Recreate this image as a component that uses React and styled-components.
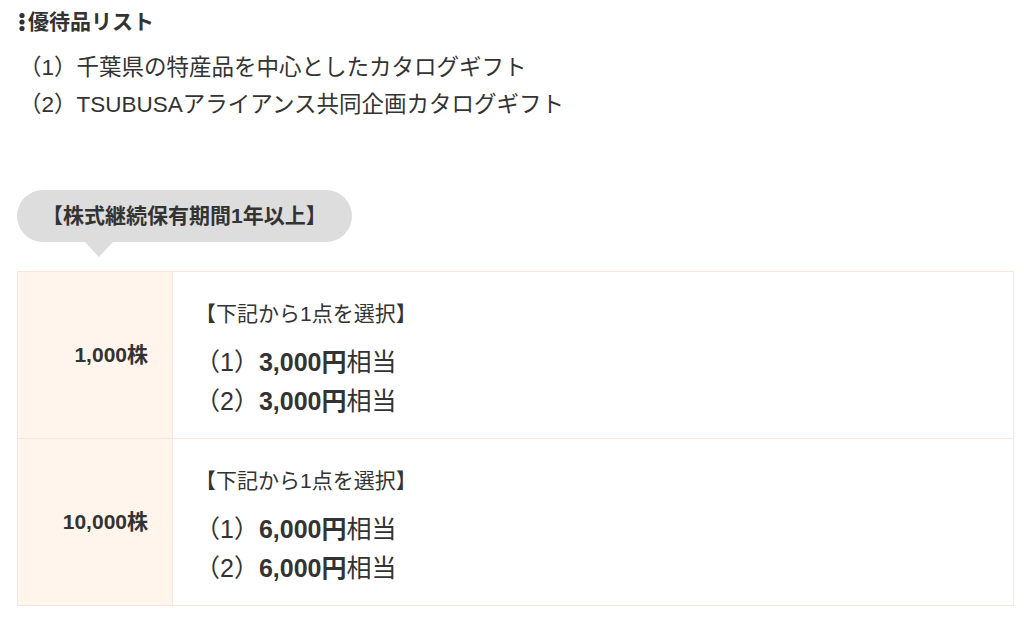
import React from 'react';
import styled, { createGlobalStyle } from 'styled-components';

const GlobalStyle = createGlobalStyle`
body {
  margin: 0;
  background: #fff;
  color: #333;
  font-family: "Liberation Sans", "Noto Sans CJK JP", sans-serif;
}
`

const Page = styled.div`
  padding: 9px 11px 0 17px;
`

const Heading = styled.h3`
  display: flex;
  align-items: center;
  gap: 1px;
  margin: 0;
  font-size: 21px;
  line-height: 26px;
  font-weight: bold;
  color: #333;
`

const GiftList = styled.ul`
  list-style: none;
  margin: 14px 0 0;
  padding: 0 0 0 2px;
  font-size: 22.5px;
  line-height: 37px;
`

const Bubble = styled.div`
  position: relative;
  display: inline-block;
  margin-top: 67px;
  padding: 0 25px;
  height: 52px;
  line-height: 52px;
  border-radius: 26px;
  background: #dddddd;
  font-size: 21px;
  font-weight: bold;
  color: #333;

  &::after {
    content: "";
    position: absolute;
    left: 68px;
    top: 52px;
    border-left: 14px solid transparent;
    border-right: 14px solid transparent;
    border-top: 15px solid #dddddd;
  }
`

const Table = styled.table`
  width: 997px;
  margin-top: 29px;
  border-collapse: collapse;
`

const Label = styled.th`
  width: 126px;
  padding: 0 24px 4px 4px;
  text-align: right;
  vertical-align: middle;
  background: #fff5ec;
  border: 1px solid #fde3da;
  font-size: 21px;
  font-weight: bold;
  color: #333;
`

const Cell = styled.td`
  padding: 27px 22px 17px;
  border: 1px solid #fde3da;
  vertical-align: top;
`

const Note = styled.p`
  margin: 0 0 15px;
  font-size: 21px;
  line-height: 29px;
`

const Item = styled.p`
  margin: 0;
  font-size: 25px;
  line-height: 39px;

  b {
    font-weight: bold;
  }
`

function Dots() {
  return (
    <svg width="10" height="20" viewBox="0 0 10 20">
      <circle cx="5" cy="3.5" r="2.6" fill="#333" />
      <circle cx="5" cy="10" r="2.6" fill="#333" />
      <circle cx="5" cy="16.5" r="2.6" fill="#333" />
    </svg>
  )
}

const rows = [
  { shares: '1,000株', amount: '3,000' },
  { shares: '10,000株', amount: '6,000' },
]

export default function App() {
  return (
    <Page>
      <GlobalStyle />
      <Heading><Dots />優待品リスト</Heading>
      <GiftList>
        <li>（1）千葉県の特産品を中心としたカタログギフト</li>
        <li>（2）TSUBUSAアライアンス共同企画カタログギフト</li>
      </GiftList>
      <Bubble>【株式継続保有期間1年以上】</Bubble>
      <Table>
        <tbody>
          {rows.map(r => (
            <tr key={r.shares}>
              <Label>{r.shares}</Label>
              <Cell>
                <Note>【下記から1点を選択】</Note>
                <Item>（1）<b>{r.amount}円</b>相当</Item>
                <Item>（2）<b>{r.amount}円</b>相当</Item>
              </Cell>
            </tr>
          ))}
        </tbody>
      </Table>
    </Page>
  )
}
